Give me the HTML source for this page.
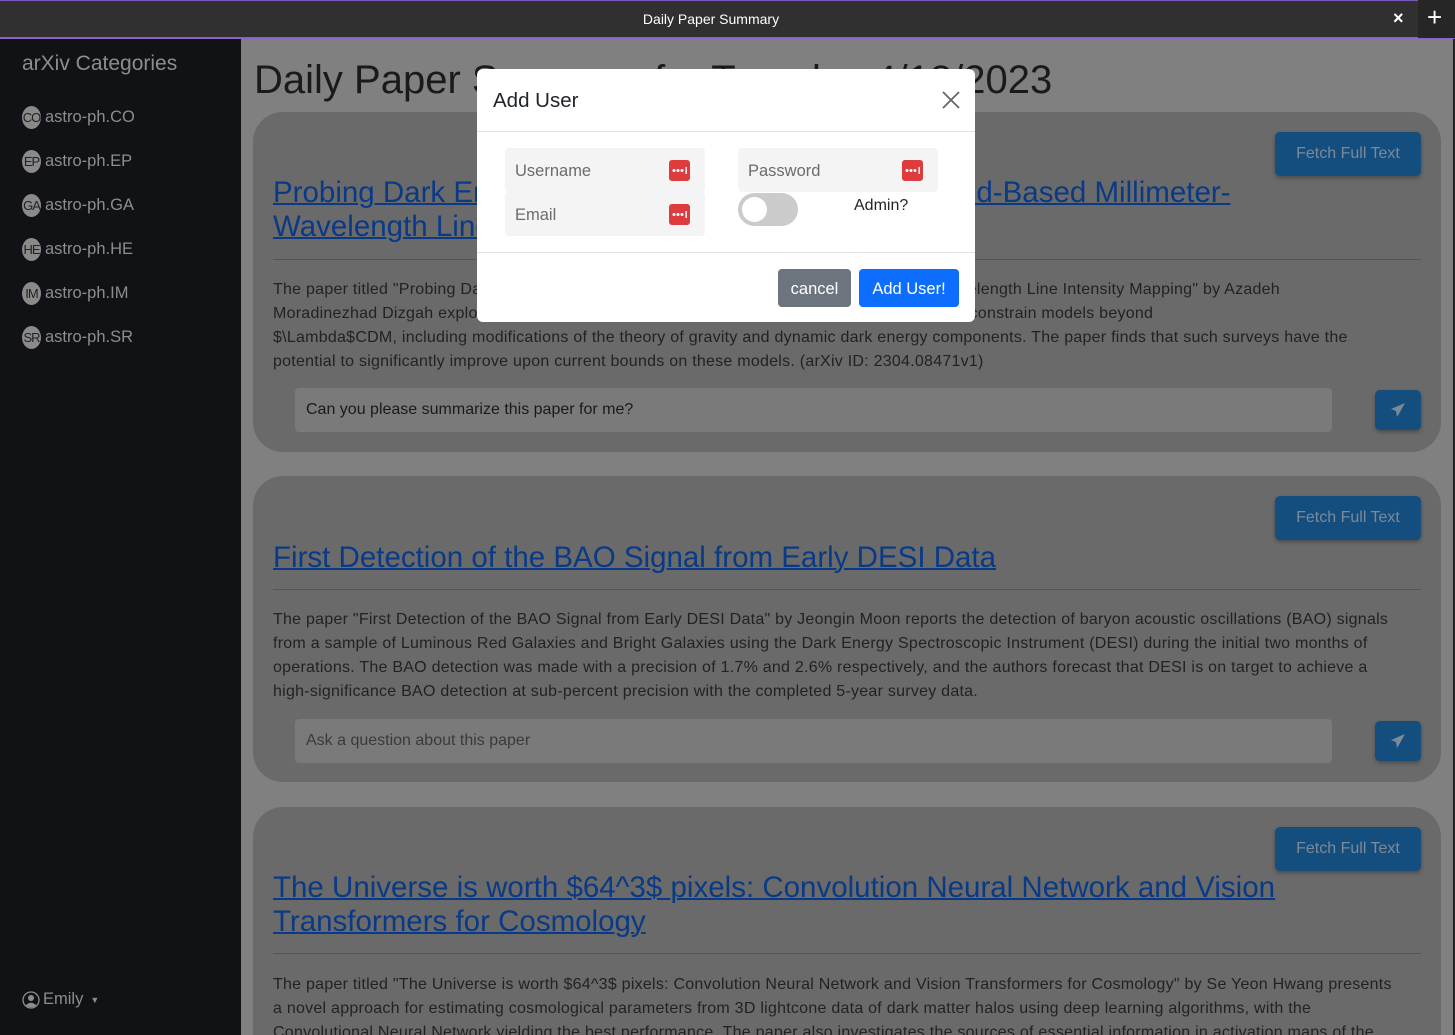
<!DOCTYPE html>
<html><head><meta charset="utf-8"><style>
*{box-sizing:border-box;margin:0;padding:0}
html,body{width:1455px;height:1035px;overflow:hidden}
body{background:#808080;font-family:"Liberation Sans",sans-serif;position:relative}
.a{position:absolute}
.tb{left:0;top:0;width:1455px;height:39px;background:#303030;border-top:1px solid #7d5bbd;border-bottom:2px solid #8a5fd0}
.tb .t{left:0;width:1422px;top:10px;text-align:center;color:#fff;font-size:14px}
.side{left:0;top:39px;width:241px;height:996px;background:#111215}
.cat{left:22px;color:#8d8d8d;font-size:16.5px;display:flex;align-items:center}
.cat i{display:inline-block;width:19px;height:23px;border-radius:50%;background:#8a8a8a;color:#222;font-style:normal;font-size:13px;text-align:center;line-height:23px;margin-right:4px;letter-spacing:-1px}
.card{left:253px;width:1188px;background:#6a6a6a;border-radius:30px}
.fetch{left:1275px;width:146px;height:44px;background:#144e7e;border-radius:5px;color:#7c8a98;font-size:16px;text-align:center;line-height:44px;box-shadow:0 2px 4px rgba(0,0,0,.3)}
.ttl{left:273px;color:#0a3a85;font-size:29.5px;text-decoration:underline;text-decoration-thickness:2px;line-height:34px;white-space:nowrap}
.hr{left:273px;width:1148px;height:1px;background:#555}
.p{left:273px;color:#222;font-size:16px;line-height:24px;white-space:nowrap;letter-spacing:0.25px}
.inp{left:295px;width:1037px;height:44px;background:#7a7a7a;border-radius:4px;font-size:16px;line-height:44px;padding-left:11px}
.send{left:1375px;width:46px;height:40px;background:#144e7e;border-radius:5px;box-shadow:0 2px 4px rgba(0,0,0,.3)}
.send svg{position:absolute;left:15px;top:12px}
.modal{left:477px;top:69px;width:498px;height:253px;background:#fff;border-radius:6px}
.fld{width:200px;height:44px;background:#f4f4f4;border-radius:4px;color:#6c6c6c;font-size:16.5px;line-height:46px;padding-left:10px}
.fld svg{position:absolute;right:15px;top:12px}
</style></head><body>
<div class="a tb"><div class="a t">Daily Paper Summary</div>
<div class="a" style="left:1393px;top:7px;color:#fff;font-size:18px;font-weight:bold">×</div>
<div class="a" style="left:1418px;top:-1px;width:37px;height:38px;background:#262626"></div>
<div class="a" style="left:1427px;top:1px;color:#fff;font-size:26px">+</div></div>
<div class="a side">
<div class="a" style="left:22px;top:13px;color:#8d8d8d;font-size:21px">arXiv Categories</div>
<div class="a cat" style="top:67px"><i>CO</i>astro-ph.CO</div>
<div class="a cat" style="top:111px"><i>EP</i>astro-ph.EP</div>
<div class="a cat" style="top:155px"><i>GA</i>astro-ph.GA</div>
<div class="a cat" style="top:199px"><i>HE</i>astro-ph.HE</div>
<div class="a cat" style="top:243px"><i>IM</i>astro-ph.IM</div>
<div class="a cat" style="top:287px"><i>SR</i>astro-ph.SR</div>
<div class="a" style="left:22px;top:951px;color:#8d8d8d;font-size:16.5px;display:flex;align-items:center">
<svg width="18" height="18" viewBox="0 0 18 18" style="margin-right:3px"><circle cx="9" cy="9" r="8" fill="none" stroke="#8d8d8d" stroke-width="1.3"/><circle cx="9" cy="7" r="3" fill="#8d8d8d"/><path d="M3.5 14.5 Q9 9 14.5 14.5 Q9 18 3.5 14.5Z" fill="#8d8d8d"/></svg>Emily <span style="font-size:9px;margin-left:7px">▼</span></div>
</div>
<div class="a" style="left:1453px;top:39px;width:2px;height:996px;background:#222"></div>
<div class="a" style="left:254px;top:58px;font-size:40px;color:#1a1a1a">Daily Paper Summary for Tuesday 4/18/2023</div>

<div class="a card" style="top:112px;height:340px"></div>
<div class="a fetch" style="top:132px">Fetch Full Text</div>
<div class="a ttl" style="top:176px">Probing Dark Energy and Modified Gravity with Ground-Based Millimeter-<br>Wavelength Line Intensity Mapping</div>
<div class="a hr" style="top:259px"></div>
<div class="a p" style="top:278px">The paper titled "Probing Dark Energy and Modified Gravity with Ground-Based Millimeter-Wavelength Line Intensity Mapping" by Azadeh<br>Moradinezhad Dizgah explores the potential of ground-based line intensity mapping surveys to constrain models beyond<br>$\Lambda$CDM, including modifications of the theory of gravity and dynamic dark energy components. The paper finds that such surveys have the<br>potential to significantly improve upon current bounds on these models. (arXiv ID: 2304.08471v1)</div>
<div class="a inp" style="top:388px;color:#1a1a1a">Can you please summarize this paper for me?</div>
<div class="a send" style="top:390px"><svg width="16" height="16" viewBox="0 0 16 16"><path d="M15 1 L1 7 L6 9 L7 15 L10 10 L15 1Z" fill="#7c8a98"/></svg></div>

<div class="a card" style="top:476px;height:306px"></div>
<div class="a fetch" style="top:496px">Fetch Full Text</div>
<div class="a ttl" style="top:541px">First Detection of the BAO Signal from Early DESI Data</div>
<div class="a hr" style="top:589px"></div>
<div class="a p" style="top:608px">The paper "First Detection of the BAO Signal from Early DESI Data" by Jeongin Moon reports the detection of baryon acoustic oscillations (BAO) signals<br>from a sample of Luminous Red Galaxies and Bright Galaxies using the Dark Energy Spectroscopic Instrument (DESI) during the initial two months of<br>operations. The BAO detection was made with a precision of 1.7% and 2.6% respectively, and the authors forecast that DESI is on target to achieve a<br>high-significance BAO detection at sub-percent precision with the completed 5-year survey data.</div>
<div class="a inp" style="top:719px;color:#3a3a3a">Ask a question about this paper</div>
<div class="a send" style="top:721px"><svg width="16" height="16" viewBox="0 0 16 16"><path d="M15 1 L1 7 L6 9 L7 15 L10 10 L15 1Z" fill="#7c8a98"/></svg></div>

<div class="a card" style="top:807px;height:260px"></div>
<div class="a fetch" style="top:827px">Fetch Full Text</div>
<div class="a ttl" style="top:871px">The Universe is worth $64^3$ pixels: Convolution Neural Network and Vision<br>Transformers for Cosmology</div>
<div class="a hr" style="top:953px"></div>
<div class="a p" style="top:973px">The paper titled "The Universe is worth $64^3$ pixels: Convolution Neural Network and Vision Transformers for Cosmology" by Se Yeon Hwang presents<br>a novel approach for estimating cosmological parameters from 3D lightcone data of dark matter halos using deep learning algorithms, with the<br>Convolutional Neural Network yielding the best performance. The paper also investigates the sources of essential information in activation maps of the</div>

<div class="a modal">
<div class="a" style="left:16px;top:20px;font-size:20.5px;color:#212529">Add User</div>
<svg class="a" style="left:465px;top:22px" width="18" height="18" viewBox="0 0 18 18"><path d="M1 1L17 17M17 1L1 17" stroke="#666" stroke-width="1.8"/></svg>
<div class="a" style="left:0;top:62px;width:498px;height:1px;background:#dee2e6"></div>
<div class="a fld" style="left:28px;top:79px">Username<svg width="21" height="21" viewBox="0 0 21 21"><rect width="21" height="21" rx="3" fill="#dc3c3c"/><circle cx="5" cy="10.5" r="1.5" fill="#fff"/><circle cx="9" cy="10.5" r="1.5" fill="#fff"/><circle cx="13" cy="10.5" r="1.5" fill="#fff"/><rect x="16.5" y="7" width="1.4" height="7" fill="#fff"/></svg></div>
<div class="a fld" style="left:261px;top:79px">Password<svg width="21" height="21" viewBox="0 0 21 21"><rect width="21" height="21" rx="3" fill="#dc3c3c"/><circle cx="5" cy="10.5" r="1.5" fill="#fff"/><circle cx="9" cy="10.5" r="1.5" fill="#fff"/><circle cx="13" cy="10.5" r="1.5" fill="#fff"/><rect x="16.5" y="7" width="1.4" height="7" fill="#fff"/></svg></div>
<div class="a fld" style="left:28px;top:123px">Email<svg width="21" height="21" viewBox="0 0 21 21"><rect width="21" height="21" rx="3" fill="#dc3c3c"/><circle cx="5" cy="10.5" r="1.5" fill="#fff"/><circle cx="9" cy="10.5" r="1.5" fill="#fff"/><circle cx="13" cy="10.5" r="1.5" fill="#fff"/><rect x="16.5" y="7" width="1.4" height="7" fill="#fff"/></svg></div>
<div class="a" style="left:261px;top:124px;width:60px;height:33px;background:#cbcbcb;border-radius:17px"></div>
<div class="a" style="left:265px;top:128px;width:25px;height:25px;background:#fff;border-radius:50%"></div>
<div class="a" style="left:377px;top:128px;font-size:16px;color:#212529">Admin?</div>
<div class="a" style="left:0;top:183px;width:498px;height:1px;background:#dee2e6"></div>
<div class="a" style="left:301px;top:200px;width:73px;height:38px;background:#6c757d;border-radius:4px;color:#fff;font-size:16.5px;text-align:center;line-height:40px">cancel</div>
<div class="a" style="left:382px;top:200px;width:100px;height:38px;background:#0d6efd;border-radius:4px;color:#fff;font-size:16.5px;text-align:center;line-height:40px">Add User!</div>
</div>
</body></html>
